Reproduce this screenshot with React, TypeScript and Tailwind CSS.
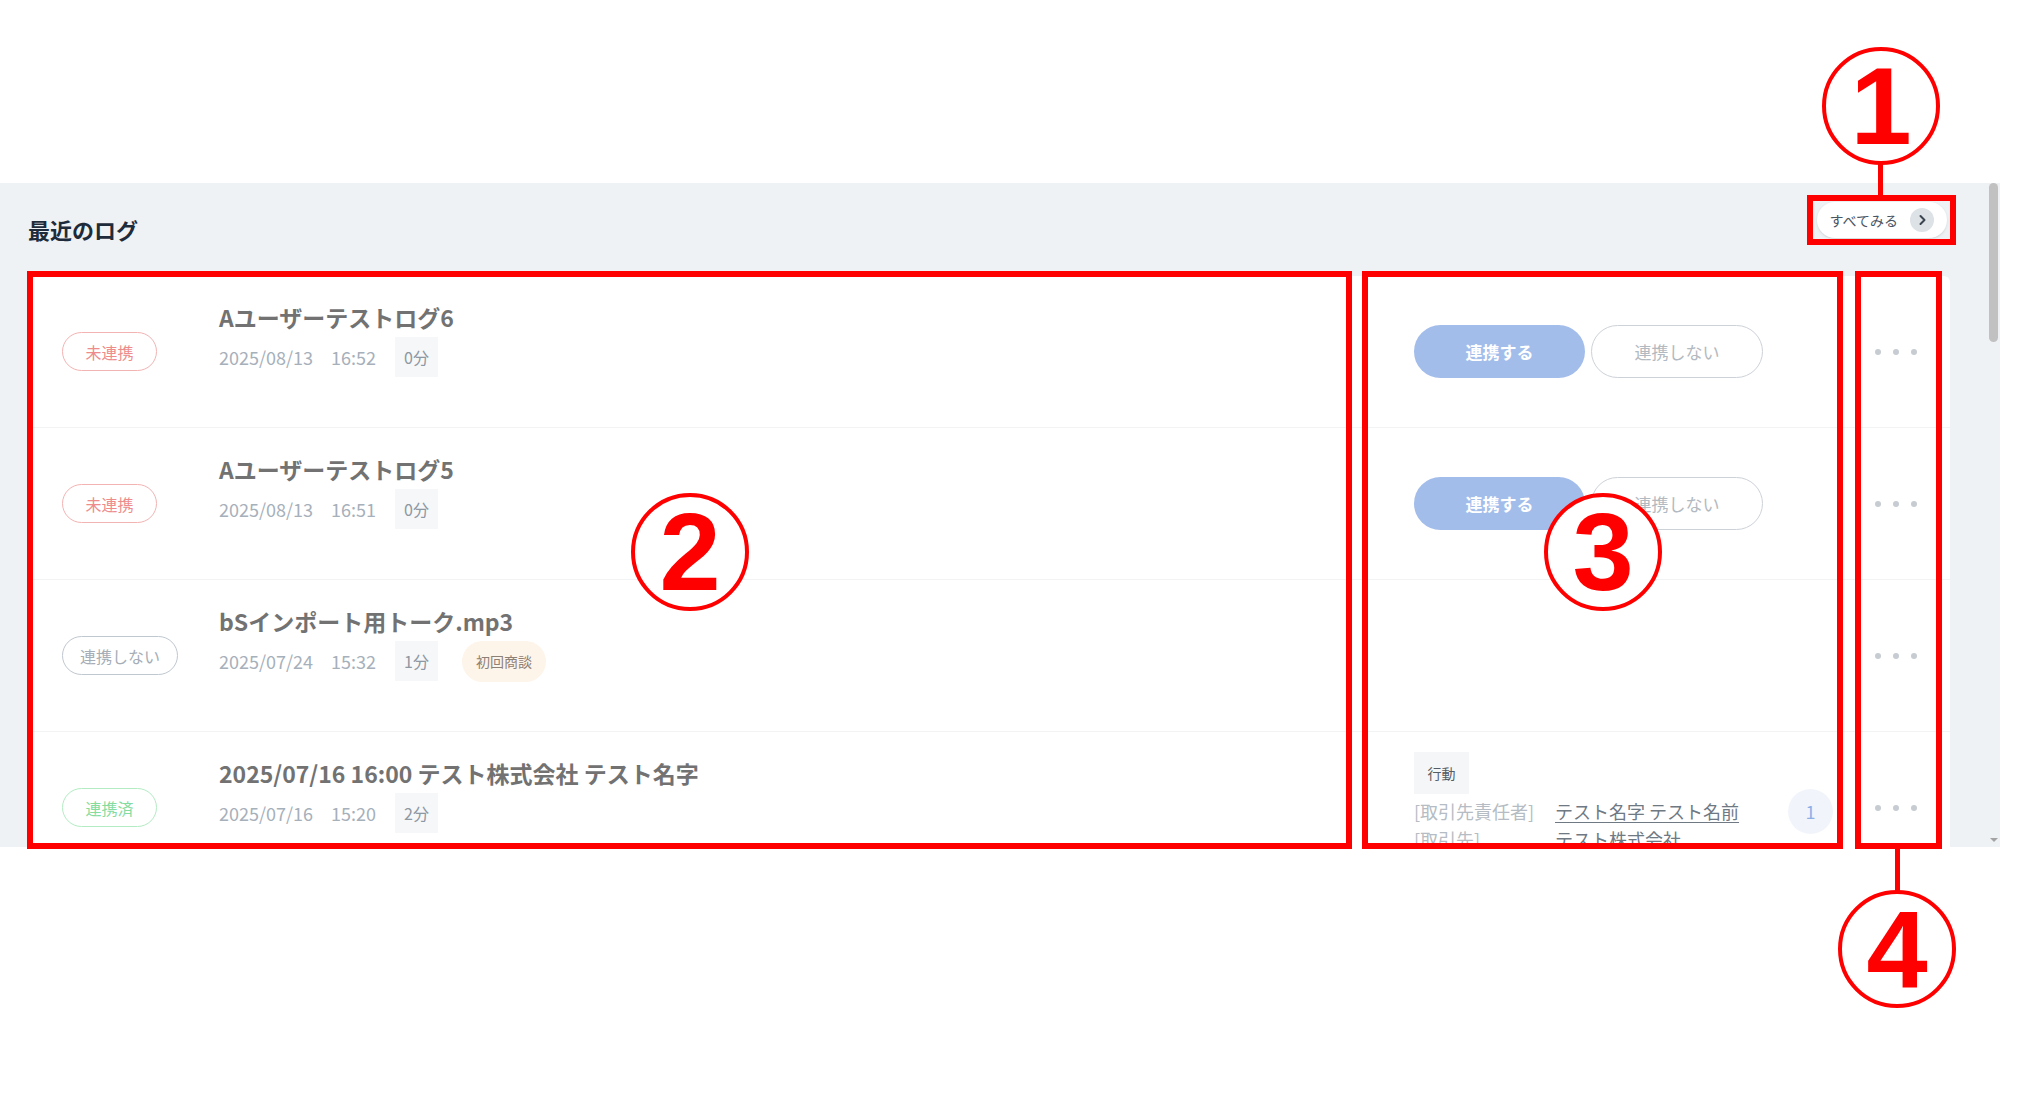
import React from "react";

type Status = "未連携" | "連携しない" | "連携済";

interface LogRow {
  status: Status;
  title: string;
  date: string;
  time: string;
  duration: string;
  tag?: string;
  kind: "buttons" | "none" | "linked";
}

const rows: LogRow[] = [
  { status: "未連携", title: "Aユーザーテストログ6", date: "2025/08/13", time: "16:52", duration: "0分", kind: "buttons" },
  { status: "未連携", title: "Aユーザーテストログ5", date: "2025/08/13", time: "16:51", duration: "0分", kind: "buttons" },
  { status: "連携しない", title: "bSインポート用トーク.mp3", date: "2025/07/24", time: "15:32", duration: "1分", tag: "初回商談", kind: "none" },
  { status: "連携済", title: "2025/07/16 16:00 テスト株式会社 テスト名字", date: "2025/07/16", time: "15:20", duration: "2分", kind: "linked" },
];

function StatusBadge({ status }: { status: Status }) {
  const tone =
    status === "未連携"
      ? "border-[#f3b3b3] text-[#ee8c8c]"
      : status === "連携済"
        ? "border-[#b3ecc3] text-[#85dc9f]"
        : "border-[#bfc7cf] text-[#a5adb6]";
  return (
    <span
      className={`inline-flex h-[39px] min-w-[95px] items-center justify-center rounded-full border-[1.5px] bg-white px-[17px] text-[16px] ${tone}`}
    >
      {status}
    </span>
  );
}

function Actions({ kind }: { kind: LogRow["kind"] }) {
  if (kind === "buttons") {
    return (
      <div className="flex items-center gap-[6px]">
        <button className="h-[53px] w-[171px] rounded-full bg-[#a3bdeb] text-[17px] font-bold text-white">
          連携する
        </button>
        <button className="h-[53px] w-[172px] rounded-full border-[1.5px] border-[#cdd2d8] bg-white text-[17px] text-[#b3b9c0]">
          連携しない
        </button>
      </div>
    );
  }
  if (kind === "linked") {
    return (
      <div className="flex flex-col items-start">
        <span className="flex h-[42px] w-[55px] items-center justify-center bg-[#f5f6f8] text-[14px] text-[#555c63]">
          行動
        </span>
        <div className="mt-[3px] flex h-[28px] w-full items-center text-[18px]">
          <span className="w-[141px] text-[#b5bcc3]">[取引先責任者]</span>
          <span className="text-[#6f7983] underline underline-offset-[3px]">テスト名字 テスト名前</span>
          <span className="-my-[9px] ml-auto mr-[21px] flex h-[45px] w-[45px] items-center justify-center rounded-full bg-[#f1f5fb] text-[18px] text-[#8eafe6]">
            1
          </span>
        </div>
        <div className="flex h-[28px] w-full items-center text-[18px]">
          <span className="w-[141px] text-[#b5bcc3]">[取引先]</span>
          <span className="text-[#6f7983] underline underline-offset-[3px]">テスト株式会社</span>
        </div>
      </div>
    );
  }
  return null;
}

function Row({ row }: { row: LogRow }) {
  return (
    <div className="flex h-[152px] items-center border-b border-[#f1f3f5] pl-[34px]">
      <div className="w-[157px] shrink-0">
        <StatusBadge status={row.status} />
      </div>
      <div className="flex-1 pb-[26px]">
        <div className="text-[23px] font-bold leading-[34px] text-[#727272]">{row.title}</div>
        <div className="mt-[3px] flex items-center text-[18px] text-[#a6b0ba]">
          <span className="mr-[18px]">{row.date}</span>
          <span className="mr-[19px]">{row.time}</span>
          <span className="flex h-[40px] items-center bg-[#f6f7f9] px-[9px] text-[16px] text-[#8e98a2]">
            {row.duration}
          </span>
          {row.tag && (
            <span className="ml-[24px] flex h-[41px] items-center rounded-full bg-[#fdf4ea] px-[14px] text-[14px] text-[#8d8175]">
              {row.tag}
            </span>
          )}
        </div>
      </div>
      <div className={`w-[440px] shrink-0 ${row.kind === "linked" ? "self-start pt-[20px]" : ""}`}>
        <Actions kind={row.kind} />
      </div>
      <div className="flex w-[96px] shrink-0 items-center gap-[12px] pl-[21px]">
        <span className="h-[6px] w-[6px] rounded-full bg-[#c6ccd2]" />
        <span className="h-[6px] w-[6px] rounded-full bg-[#c6ccd2]" />
        <span className="h-[6px] w-[6px] rounded-full bg-[#c6ccd2]" />
      </div>
    </div>
  );
}

function Circled({ n, className }: { n: string; className: string }) {
  return (
    <div
      className={`absolute flex h-[118px] w-[118px] items-center justify-center rounded-full border-[4px] border-[#ff0000] bg-white font-['Liberation_Sans',sans-serif] text-[110px] font-bold leading-none text-[#ff0000] ${className}`}
    >
      {n}
    </div>
  );
}

export default function App() {
  return (
    <div className="relative h-[1104px] w-[2036px] overflow-hidden bg-white font-['Noto_Sans_CJK_JP','Noto_Sans',sans-serif]">
      {/* panel */}
      <div className="mt-[183px] flex h-[664px] w-[2000px] bg-[#eef2f5]">
        <div className="flex-1 overflow-hidden pl-[28px] pr-[37px]">
          <div className="flex items-start justify-between pt-[19px]">
            <h2 className="mt-[11px] text-[22px] font-bold leading-[32px] text-[#1e2b3a]">最近のログ</h2>
            <button className="mr-[3px] flex h-[36px] items-center gap-[12px] rounded-full bg-white pl-[13px] pr-[13px] text-[14px] text-[#4a5563] shadow-sm">
              すべてみる
              <span className="flex h-[24px] w-[24px] items-center justify-center rounded-full bg-[#dde2e7]">
                <svg width="14" height="14" viewBox="0 0 14 14" fill="none">
                  <path d="M5.5 3L9.5 7l-4 4" stroke="#3a4550" strokeWidth="2" strokeLinecap="round" strokeLinejoin="round" />
                </svg>
              </span>
            </button>
          </div>
          <div className="mt-[31px] rounded-md bg-white">
            {rows.map((r) => (
              <Row key={r.title} row={r} />
            ))}
          </div>
        </div>
        <div className="flex w-[13px] flex-col items-center justify-between">
          <div className="h-[159px] w-[9px] rounded-full bg-[#c1c1c1]" />
          <div className="mb-[5px] h-0 w-0 border-x-[4px] border-t-[4px] border-x-transparent border-t-[#a3a3a3]" />
        </div>
      </div>

      {/* annotations */}
      <div className="absolute left-[1807px] top-[195px] h-[50px] w-[149px] border-[6px] border-[#ff0000]" />
      <div className="absolute left-[27px] top-[271px] h-[578px] w-[1325px] border-[6px] border-[#ff0000]" />
      <div className="absolute left-[1362px] top-[271px] h-[578px] w-[481px] border-[6px] border-[#ff0000]" />
      <div className="absolute left-[1855px] top-[271px] h-[578px] w-[87px] border-[6px] border-[#ff0000]" />
      <div className="absolute left-[1878px] top-[163px] h-[33px] w-[5px] bg-[#ff0000]" />
      <div className="absolute left-[1895px] top-[848px] h-[44px] w-[5px] bg-[#ff0000]" />
      <Circled n="1" className="left-[1822px] top-[47px]" />
      <Circled n="2" className="left-[631px] top-[493px]" />
      <Circled n="3" className="left-[1544px] top-[493px]" />
      <Circled n="4" className="left-[1838px] top-[890px]" />
    </div>
  );
}
